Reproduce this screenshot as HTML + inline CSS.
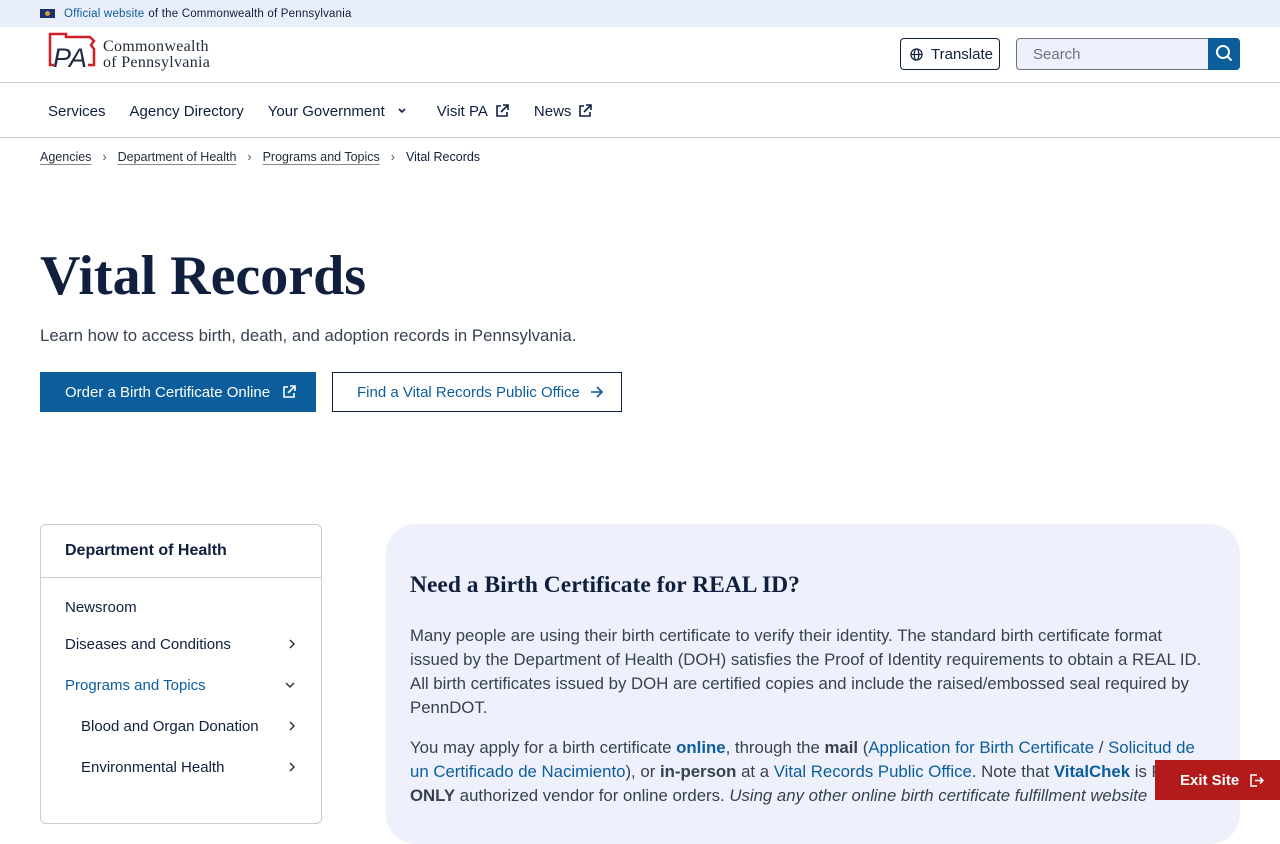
<!DOCTYPE html>
<html><head><meta charset="utf-8"><style>
*{box-sizing:border-box;margin:0;padding:0}
body{width:1280px;height:800px;overflow:hidden;font-family:"Liberation Sans",sans-serif;color:#1f2a37;background:#fff;position:relative}
a{color:#0b5d9c}
.top{height:27px;background:#e9eefb;font-size:11.5px;display:flex;align-items:center;padding-left:40px;color:#0f1f3d;letter-spacing:0.2px}
.flag{width:15px;height:9px;background:#1c2f6e;margin-right:9px;position:relative}
.flag:after{content:"";position:absolute;left:5px;top:2px;width:5px;height:5px;background:#c9a23a;border-radius:50%}
.top a{margin-right:4px}
.hdr{height:56px;border-bottom:1px solid #ccc;position:relative}
.logo{position:absolute;left:44px;top:4px}
.lt{position:absolute;left:103px;top:12px;font-family:"Liberation Serif",serif;font-size:16px;line-height:16px;color:#1f2a37;letter-spacing:0.3px}
.tr{position:absolute;left:900px;top:11px;width:100px;height:32px;border:1px solid #0f1f3d;border-radius:4px;font-size:15px;display:flex;align-items:center;padding-left:30px;color:#0f1f3d}
.srch{position:absolute;left:1016px;top:11px;width:224px;height:32px;border:1px solid #6b7280;border-radius:4px;background:#eef1fb;font-size:15px;color:#6b7280;padding:7px 16px}
.sb{position:absolute;right:-1px;top:-1px;width:32px;height:32px;background:#0b5d9c;border-radius:0 4px 4px 0}
.nav{height:55px;border-bottom:1px solid #ccc;display:flex;align-items:center;padding-left:48px;font-size:15px;color:#0f1f3d;padding-top:2px}
.nav span{margin-right:24px;display:flex;align-items:center}
.bc{position:absolute;top:150px;left:40px;font-size:12.5px;color:#0f1f3d;display:flex}
.bc a{color:#1f2a37;text-decoration:underline;text-decoration-color:#888;text-underline-offset:3px}
.bc i{font-style:normal;margin:0 11px;color:#555}
h1{position:absolute;left:40px;top:244px;font-family:"Liberation Serif",serif;font-weight:bold;font-size:56px;color:#0f1f3d}
.lead{position:absolute;left:40px;top:326px;font-size:16.8px;color:#374151}
.b1{position:absolute;left:40px;top:372px;width:276px;height:40px;background:#0b5d9c;color:#fff;font-size:15px;display:flex;align-items:center;padding-left:25px}
.b2{position:absolute;left:332px;top:372px;width:290px;height:40px;border:1px solid #0f1f3d;color:#0b5d9c;font-size:15px;display:flex;align-items:center;padding-left:24px}
.side{position:absolute;left:40px;top:524px;width:282px;height:300px;border:1px solid #ccc;border-radius:6px}
.side .h{height:53px;border-bottom:1px solid #ccc;padding:17px 24px;font-weight:bold;font-size:16px;color:#0f1f3d}
.it{position:absolute;font-size:15px;color:#0f1f3d;left:24px}
.ch{position:absolute;right:24px}
.card{position:absolute;left:386px;top:524px;width:854px;height:320px;background:#eef1fb;border-radius:30px}
.card h2{position:absolute;left:24px;top:48px;font-family:"Liberation Serif",serif;font-weight:bold;font-size:23.5px;color:#0f1f3d}
.card p{position:absolute;left:24px;width:800px;font-size:16.8px;line-height:24px;color:#374151}
.card p a{color:#0b5d9c}
.exit{position:absolute;left:1155px;top:760px;width:125px;height:40px;background:#b31b1b;color:#fff;font-weight:bold;font-size:15px;display:flex;align-items:center;padding-left:25px}
</style></head><body>
<div class="top"><div class="flag"></div><a>Official website</a> of the Commonwealth of Pennsylvania</div>
<div class="hdr">
<svg class="logo" width="52" height="42" viewBox="0 0 52 42"><path d="M6 8 V3 H22 V6 H46 L50 10 L47 14 L50 18 V34 H44" fill="none" stroke="#d11f26" stroke-width="2.5"/><path d="M6 8 V34 H10" fill="none" stroke="#d11f26" stroke-width="2.5"/><text x="9" y="36" font-family="Liberation Sans" font-style="italic" font-size="27" fill="#1f2a44">PA</text></svg>
<div class="lt">Commonwealth<br>of Pennsylvania</div>
<div class="tr"><svg style="position:absolute;left:9px;top:9px" width="13" height="13" viewBox="0 0 14 14" fill="none" stroke="#0f1f3d" stroke-width="1.3"><circle cx="7" cy="7" r="6"/><ellipse cx="7" cy="7" rx="2.5" ry="6"/><path d="M1 7h12"/></svg>Translate</div>
<div class="srch">Search<div class="sb"><svg width="32" height="32" viewBox="0 0 32 32" fill="none" stroke="#fff" stroke-width="2"><circle cx="15" cy="14" r="6"/><path d="M19.5 18.5l4 4"/></svg></div></div>
</div>
<div class="nav"><span>Services</span><span>Agency Directory</span><span>Your Government <svg style="margin-left:12px" width="10" height="10" viewBox="0 0 10 10"><path d="M2 3l3 3 3-3" fill="none" stroke="#0f1f3d" stroke-width="1.6"/></svg></span><span style="margin-left:6px">Visit PA <svg style="margin-left:6px" width="16" height="16" viewBox="0 0 16 16" fill="none" stroke="#0f1f3d" stroke-width="1.6"><path d="M7 3H3v10h10V9M9 2h5v5M14 2L7 9"/></svg></span><span>News <svg style="margin-left:6px" width="16" height="16" viewBox="0 0 16 16" fill="none" stroke="#0f1f3d" stroke-width="1.6"><path d="M7 3H3v10h10V9M9 2h5v5M14 2L7 9"/></svg></span></div>
<div class="bc"><a>Agencies</a><i>›</i><a>Department of Health</a><i>›</i><a>Programs and Topics</a><i>›</i><span>Vital Records</span></div>
<h1>Vital Records</h1>
<div class="lead">Learn how to access birth, death, and adoption records in Pennsylvania.</div>
<div class="b1">Order a Birth Certificate Online <svg style="margin-left:11px" width="16" height="16" viewBox="0 0 16 16" fill="none" stroke="#fff" stroke-width="1.6"><path d="M7 3H3v10h10V9M9 2h5v5M14 2L7 9"/></svg></div>
<div class="b2">Find a Vital Records Public Office <svg style="margin-left:10px" width="14" height="14" viewBox="0 0 14 14" fill="none" stroke="#0b5d9c" stroke-width="1.6"><path d="M1 7h11M7 2l5 5-5 5"/></svg></div>
<div class="side"><div class="h">Department of Health</div>
<div class="it" style="top:74px">Newsroom</div>
<div class="it" style="top:111px">Diseases and Conditions</div><svg class="ch" style="top:112px" width="10" height="14" viewBox="0 0 10 14"><path d="M3 3l4 4-4 4" fill="none" stroke="#333" stroke-width="1.5"/></svg>
<div class="it" style="top:152px;color:#0b5d9c">Programs and Topics</div><svg class="ch" style="top:155px" width="14" height="10" viewBox="0 0 14 10"><path d="M3 3l4 4 4-4" fill="none" stroke="#333" stroke-width="1.5"/></svg>
<div class="it" style="top:193px;left:40px">Blood and Organ Donation</div><svg class="ch" style="top:194px" width="10" height="14" viewBox="0 0 10 14"><path d="M3 3l4 4-4 4" fill="none" stroke="#333" stroke-width="1.5"/></svg>
<div class="it" style="top:234px;left:40px">Environmental Health</div><svg class="ch" style="top:235px" width="10" height="14" viewBox="0 0 10 14"><path d="M3 3l4 4-4 4" fill="none" stroke="#333" stroke-width="1.5"/></svg>
</div>
<div class="card"><h2>Need a Birth Certificate for REAL ID?</h2>
<p style="top:100px">Many people are using their birth certificate to verify their identity. The standard birth certificate format issued by the Department of Health (DOH) satisfies the Proof of Identity requirements to obtain a REAL ID. All birth certificates issued by DOH are certified copies and include the raised/embossed seal required by PennDOT.</p>
<p style="top:212px">You may apply for a birth certificate <a><b>online</b></a>, through the <b>mail</b> (<a>Application for Birth Certificate</a> / <a>Solicitud de un Certificado de Nacimiento</a>), or <b>in-person</b> at a <a>Vital Records Public Office</a>. Note that <a><b>VitalChek</b></a> is PA's <b>ONLY</b> authorized vendor for online orders. <i>Using any other online birth certificate fulfillment website</i></p>
</div>
<div class="exit">Exit Site <svg style="margin-left:10px" width="15" height="15" viewBox="0 0 15 15" fill="none" stroke="#fff" stroke-width="1.5"><path d="M8 2H2v11h6M6 7.5h8M11 4.5l3 3-3 3"/></svg></div>
</body></html>
